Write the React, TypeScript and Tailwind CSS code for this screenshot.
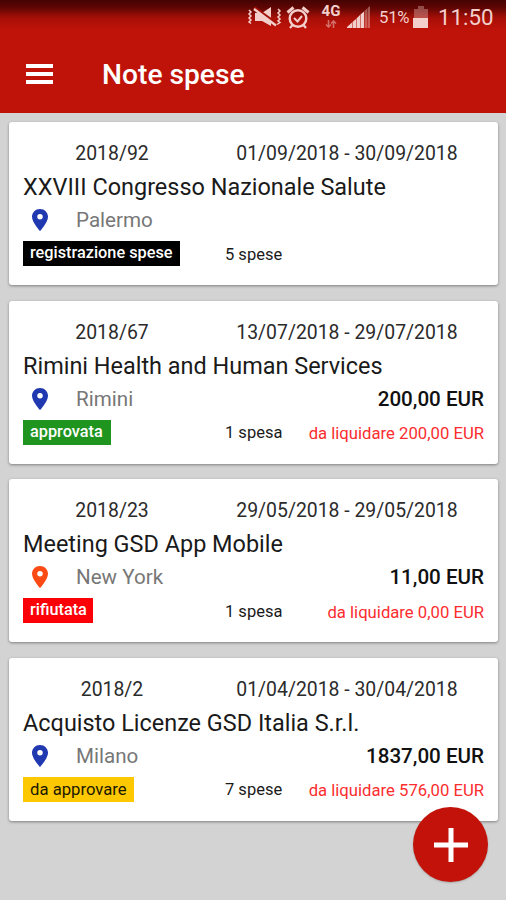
import React from 'react';

interface ExpenseNote {
  id: string;
  period: string;
  title: string;
  city: string;
  pinColor: string;
  status: string;
  statusStyle: string;
  count: string;
  total?: string;
  toPay?: string;
}

const notes: ExpenseNote[] = [
  {
    id: '2018/92',
    period: '01/09/2018 - 30/09/2018',
    title: 'XXVIII Congresso Nazionale Salute',
    city: 'Palermo',
    pinColor: 'text-[#2038b0]',
    status: 'registrazione spese',
    statusStyle: 'w-[157px] bg-black text-[16.300px] text-white font-medium',
    count: '5 spese',
  },
  {
    id: '2018/67',
    period: '13/07/2018 - 29/07/2018',
    title: 'Rimini Health and Human Services',
    city: 'Rimini',
    pinColor: 'text-[#2038b0]',
    status: 'approvata',
    statusStyle: 'w-[88px] bg-[#1f941f] text-[16.300px] text-white font-medium',
    count: '1 spesa',
    total: '200,00 EUR',
    toPay: 'da liquidare 200,00 EUR',
  },
  {
    id: '2018/23',
    period: '29/05/2018 - 29/05/2018',
    title: 'Meeting GSD App Mobile',
    city: 'New York',
    pinColor: 'text-[#fc4a14]',
    status: 'rifiutata',
    statusStyle: 'w-[70px] bg-[#fb0007] text-[16.300px] text-white font-medium',
    count: '1 spesa',
    total: '11,00 EUR',
    toPay: 'da liquidare 0,00 EUR',
  },
  {
    id: '2018/2',
    period: '01/04/2018 - 30/04/2018',
    title: 'Acquisto Licenze GSD Italia S.r.l.',
    city: 'Milano',
    pinColor: 'text-[#2038b0]',
    status: 'da approvare',
    statusStyle: 'w-[111px] bg-[#fdc800] text-[16.700px] text-[#1c1800]',
    count: '7 spese',
    total: '1837,00 EUR',
    toPay: 'da liquidare 576,00 EUR',
  },
];

function StatusBar() {
  return (
    <div className="flex h-9 items-center pl-[247px] text-[#f3cfcb]">
      {/* Vibrate / muted */}
      <svg className="h-6 w-[35px] shrink-0" viewBox="0 0 35 24" fill="none" stroke="currentColor">
        <path d="M2 4l2 2-2 2 2 2-2 2 2 2-2 2 2 1.500" strokeWidth="1.500" />
        <path d="M31 3l2 2-2 2 2 2-2 2 2 2-2 2 2 1.500-3 2" strokeWidth="1.500" />
        <path d="M8 7h7l9-6v19l-9-5H8z" fill="currentColor" stroke="none" />
        <path d="M7 1.500l21 15" stroke="#a30f07" strokeWidth="3" />
        <path d="M7 3l22 16.500" strokeWidth="2.200" />
      </svg>
      {/* Alarm */}
      <svg className="ml-[4px] h-6 w-6 shrink-0" viewBox="0 0 24 24" fill="none" stroke="currentColor">
        <circle cx="12" cy="12.500" r="8.300" strokeWidth="2.400" />
        <path d="M8 12l3.500 3.500L16 10" strokeWidth="2" />
        <path d="M1.500 6.500l6-5M22.500 6.500l-6-5" strokeWidth="3" />
        <path d="M6.500 19L4 22M17.500 19l2.500 3" strokeWidth="2.200" />
      </svg>
      {/* Network */}
      <div className="ml-[11px] flex h-8 w-5 shrink-0 flex-col items-center">
        <span className="text-[15px] leading-[18px] font-bold">4G</span>
        <svg className="h-2 w-3 opacity-50" viewBox="0 0 12 8" fill="none" stroke="currentColor" strokeWidth="1.600">
          <path d="M3.500 0v7M1 4.500l2.500 2.500 2.500-2.500M8.500 8V1M6 3.500l2.500-2.500 2.500 2.500" />
        </svg>
      </div>
      <svg className="ml-[6px] h-6 w-6 shrink-0" viewBox="0 0 24 24" fill="currentColor">
        <path d="M0 22v-1l5-4.500V22zM5.500 22v-6l3.500-3v9zM9.500 22v-9.500l3.500-3.500v13zM13.500 22V8.500l3.500-3V22z" />
        <path d="M17.500 22V5l2.500-2.500V22zM20.500 22V2l2.500-2v22z" opacity=".4" />
      </svg>
      <span className="ml-[8px] w-[31px] shrink-0 text-[16.700px] tracking-[-0.2px] whitespace-nowrap">51%</span>
      {/* Battery */}
      <svg className="ml-[3px] h-6 w-4 shrink-0" viewBox="0 0 16 24" fill="currentColor">
        <path d="M5 0h6v3h4v9H1V3h4z" opacity=".35" />
        <path d="M0 12h15v10H0z" />
      </svg>
      <span className="ml-[9px] text-[22.300px] whitespace-nowrap">11:50</span>
    </div>
  );
}

function NoteCard({ note }: { note: ExpenseNote }) {
  return (
    <div className="h-[163px] rounded-[3px] bg-white px-[14px] pt-[15px] shadow-[0_1px_3px_rgba(0,0,0,0.4)]">
      <div className="flex h-[33px] items-center text-[19.400px] text-[#2b2b2b] whitespace-nowrap">
        <div className="w-[178px] text-center">{note.id}</div>
        <div className="ml-[9px] flex-1 text-center">{note.period}</div>
      </div>

      <h2 className="h-[34px] text-[23.450px] leading-[34px] text-[#1a1a1a] whitespace-nowrap">{note.title}</h2>

      <div className="flex h-[32px] items-center text-[20.600px]">
        <svg className={`ml-[9px] h-[22px] w-4 ${note.pinColor}`} viewBox="0 0 16 22" fill="currentColor">
          <path
            fillRule="evenodd"
            d="M8 0C3.580 0 0 3.460 0 7.700 0 13.500 8 22 8 22s8-8.500 8-14.300C16 3.460 12.420 0 8 0zm0 10.400a2.750 2.750 0 1 1 0-5.500 2.750 2.750 0 0 1 0 5.500z"
          />
        </svg>
        <span className="ml-[28px] pt-px text-[#777]">{note.city}</span>
        <span className="ml-auto pt-px font-medium text-[#111]">{note.total}</span>
      </div>

      <div className="mt-[5px] flex h-[25px] items-center text-[16.500px] whitespace-nowrap">
        <div className="w-[202px]">
          <div className={`flex h-[25px] items-center pl-[7px] ${note.statusStyle}`}>{note.status}</div>
        </div>
        <span className="pt-[3px] text-[#1a1a1a]">{note.count}</span>
        <span className="ml-auto pt-[3px] text-[16.700px] text-[#fb2d2f]">{note.toPay}</span>
      </div>
    </div>
  );
}

export default function App() {
  return (
    <div className="relative h-[900px] w-[506px] overflow-hidden bg-[#d3d3d3] font-[Roboto,sans-serif]">
      <header className="h-[113px] bg-[#bf1309] bg-[linear-gradient(to_bottom,#430302_0px,#610604_8px,#a70f07_18px,#bf1309_30px)]">
        <StatusBar />
        <div className="flex h-[77px] items-center pl-[26px] text-white">
          <div className="flex w-[27px] flex-col gap-[4px] pb-[2px]">
            <span className="h-[4px] bg-white" />
            <span className="h-[4px] bg-white" />
            <span className="h-[4px] bg-white" />
          </div>
          <h1 className="ml-[49px] pt-[1px] text-[28.200px] font-medium">Note spese</h1>
        </div>
      </header>

      <main className="flex flex-col gap-[15.600px] pt-[9px] pr-[8px] pl-[9px]">
        {notes.map((note) => (
          <NoteCard key={note.id} note={note} />
        ))}
      </main>

      <button
        aria-label="Aggiungi nota spese"
        className="absolute top-[807px] left-[413px] flex h-[75px] w-[75px] items-center justify-center rounded-full bg-[#c21209] shadow-[0_1px_2px_rgba(0,0,0,0.2)]"
      >
        <svg className="h-[34px] w-[34px]" viewBox="0 0 34 34" stroke="#fff" strokeWidth="5">
          <path d="M17 0v34M0 17h34" />
        </svg>
      </button>
    </div>
  );
}
